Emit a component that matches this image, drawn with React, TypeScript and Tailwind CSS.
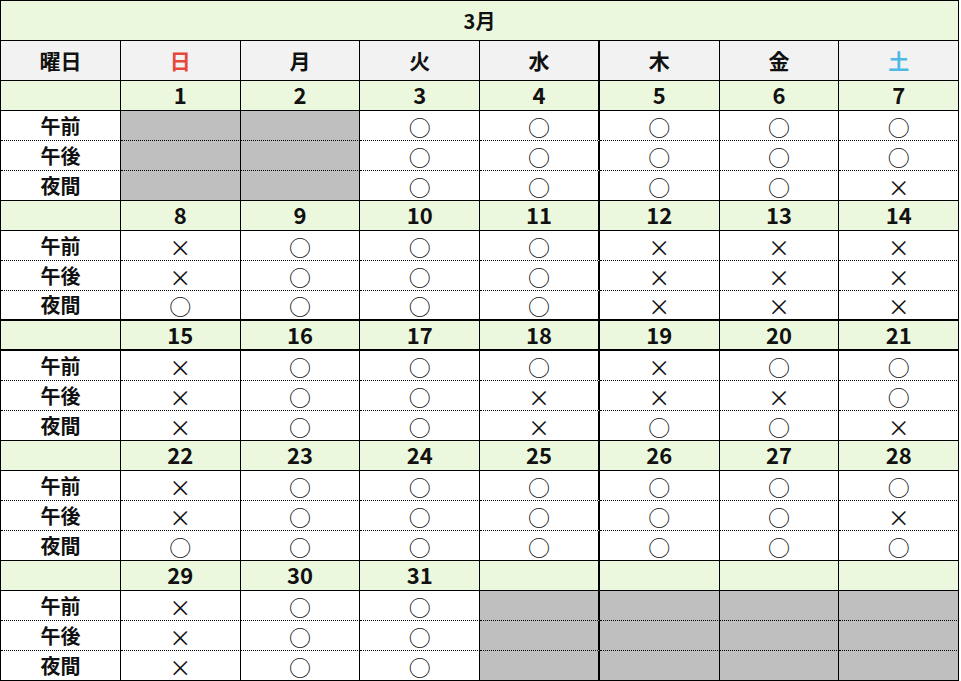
import React from "react"

type Mark = "o" | "x" | "g" | ""

const days = [
	{ label: "日", color: "text-[#e8463a]" },
	{ label: "月", color: "" },
	{ label: "火", color: "" },
	{ label: "水", color: "" },
	{ label: "木", color: "" },
	{ label: "金", color: "" },
	{ label: "土", color: "text-[#4cb9e6]" },
]

const slots = ["午前", "午後", "夜間"]

const weeks: { dates: (number | null)[]; rows: Mark[][] }[] = [
	{
		dates: [1, 2, 3, 4, 5, 6, 7],
		rows: [
			["g", "g", "o", "o", "o", "o", "o"],
			["g", "g", "o", "o", "o", "o", "o"],
			["g", "g", "o", "o", "o", "o", "x"],
		],
	},
	{
		dates: [8, 9, 10, 11, 12, 13, 14],
		rows: [
			["x", "o", "o", "o", "x", "x", "x"],
			["x", "o", "o", "o", "x", "x", "x"],
			["o", "o", "o", "o", "x", "x", "x"],
		],
	},
	{
		dates: [15, 16, 17, 18, 19, 20, 21],
		rows: [
			["x", "o", "o", "o", "x", "o", "o"],
			["x", "o", "o", "x", "x", "x", "o"],
			["x", "o", "o", "x", "o", "o", "x"],
		],
	},
	{
		dates: [22, 23, 24, 25, 26, 27, 28],
		rows: [
			["x", "o", "o", "o", "o", "o", "o"],
			["x", "o", "o", "o", "o", "o", "x"],
			["o", "o", "o", "o", "o", "o", "o"],
		],
	},
	{
		dates: [29, 30, 31, null, null, null, null],
		rows: [
			["x", "o", "o", "g", "g", "g", "g"],
			["x", "o", "o", "g", "g", "g", "g"],
			["x", "o", "o", "g", "g", "g", "g"],
		],
	},
]

const row = "grid grid-cols-[120px_repeat(7,1fr)] h-[30px]"

function rightBorder(i: number) {
	return i === 3 ? "border-r-2" : "border-r"
}

function bottomBorder(wi: number, ri: number) {
	if (ri < 2) return "border-b [border-bottom-style:dotted]"
	if (wi === 1) return "border-b-2"
	return "border-b"
}

export default function App() {
	return (
		<div className="w-[959px] bg-white font-['Noto_Sans_CJK_JP',sans-serif] text-[#111] border-l border-t border-black">
			{/* Title */}
			<div className="h-[40px] flex items-center justify-center bg-[#ecf8dd] border-b border-r border-black text-[20px] font-bold">
				3月
			</div>

			{/* Weekday header */}
			<div className="grid grid-cols-[120px_repeat(7,1fr)] h-[40px] bg-[#f2f2f2] border-b border-black text-[21px] font-bold">
				<div className="flex items-center justify-center border-r border-black">曜日</div>
				{days.map((d, i) => (
					<div key={d.label} className={`flex items-center justify-center border-black ${rightBorder(i)} ${d.color}`}>
						{d.label}
					</div>
				))}
			</div>

			{weeks.map((w, wi) => (
				<div key={wi}>
					{/* Date row */}
					<div
						className={`${row} bg-[#ecf8dd] ${
							wi === 2 ? "border-b-2" : "border-b"
						} border-black text-[22px] font-bold`}
					>
						<div className="border-r border-black" />
						{w.dates.map((n, i) => (
							<div key={i} className={`flex items-center justify-center leading-none pb-[3px] border-black ${rightBorder(i)}`}>
								{n ?? ""}
							</div>
						))}
					</div>

					{w.rows.map((r, ri) => (
						<div key={ri} className={row}>
							<div
								className={`flex items-center justify-center leading-none border-r border-black ${bottomBorder(wi, ri)} text-[20px] font-bold`}
							>
								{slots[ri]}
							</div>
							{r.map((m, i) => (
								<div
									key={i}
									className={`flex items-center justify-center leading-none text-[22px] border-black ${rightBorder(i)} ${bottomBorder(wi, ri)} ${
										m === "g" ? "bg-[#bfbfbf]" : ""
									}`}
								>
									{m === "o" ? "○" : m === "x" ? "×" : ""}
								</div>
							))}
						</div>
					))}
				</div>
			))}
		</div>
	)
}
